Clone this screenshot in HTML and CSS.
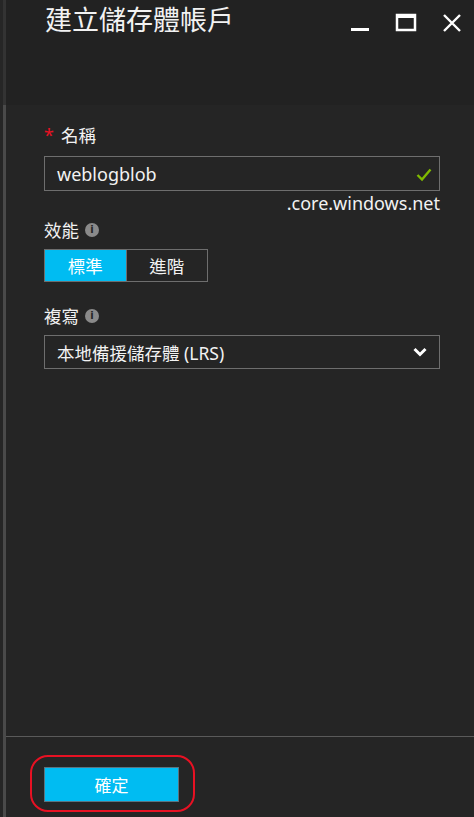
FILE: index.html
```html
<!doctype html>
<html>
  <head>
    <meta charset="utf-8">
    <title>建立儲存體帳戶</title>
    <link rel="stylesheet" href="styles.css">
  </head>
  <body>
    <div class="page">
      <div class="rail">
        <div class="rail-top"></div>
        <div class="rail-body"></div>
      </div>
      <div class="blade">
        <div class="blade-header">
          <h1 class="blade-title">建立儲存體帳戶</h1>
          <div class="window-buttons">
            <svg class="win-icon" width="20" height="20" viewBox="0 0 20 20">
              <rect x="1" y="15" width="18" height="3" fill="#fff"/>
            </svg>
            <svg class="win-icon" width="22" height="20" viewBox="0 0 22 20">
              <rect x="2" y="2" width="18" height="15" fill="none" stroke="#fff" stroke-width="2.5"/>
              <rect x="2" y="1" width="18" height="4" fill="#fff"/>
            </svg>
            <svg class="win-icon" width="20" height="20" viewBox="0 0 20 20">
              <path d="M2 2 L18 18 M18 2 L2 18" stroke="#fff" stroke-width="2.4" fill="none"/>
            </svg>
          </div>
        </div>

        <div class="blade-body">
          <div class="form">
            <label class="field-label"><span class="required">*</span> 名稱</label>
            <div class="textbox">
              <span class="textbox-value">weblogblob</span>
              <svg class="check" width="16" height="14" viewBox="0 0 16 14">
                <path d="M1.5 7 L6 11.5 L14.5 1.5" stroke="#7fba00" stroke-width="2.4" fill="none"/>
              </svg>
            </div>
            <div class="suffix">.core.windows.net</div>

            <label class="field-label">效能 <span class="info">i</span></label>
            <div class="toggle">
              <span class="toggle-option selected">標準</span>
              <span class="toggle-option">進階</span>
            </div>

            <label class="field-label label-gap">複寫 <span class="info">i</span></label>
            <div class="dropdown">
              <span class="dropdown-value">本地備援儲存體 (LRS)</span>
              <svg class="chevron" width="14" height="10" viewBox="0 0 14 10">
                <path d="M1.5 2 L7 7.5 L12.5 2" stroke="#fff" stroke-width="3" fill="none"/>
              </svg>
            </div>
          </div>

          <div class="blade-footer">
            <div class="highlight">
              <button class="ok-button">確定</button>
            </div>
          </div>
        </div>
      </div>
    </div>
  </body>
</html>
```

FILE: styles.css
```css
html, body {
  height: 100%;
  margin: 0;
  padding: 0;
}
body {
  background: #222222;
  color: #f2f2f2;
  font-family: "Segoe UI", "Noto Sans", "Noto Sans CJK TC", sans-serif;
  overflow: hidden;
}
.page {
  display: flex;
  height: 817px;
}
.rail {
  width: 6px;
  display: flex;
  flex-direction: column;
  background: #262626;
}
.rail-top {
  height: 105px;
  margin-left: 3px;
  background: #333333;
}
.rail-body {
  flex: 1;
  margin-left: 3px;
  background: #4a4a4a;
}
.blade {
  flex: 1;
  display: flex;
  flex-direction: column;
}
.blade-header {
  height: 105px;
  background: #222222;
  display: flex;
  align-items: flex-start;
  justify-content: space-between;
  padding-left: 39px;
  padding-right: 12px;
  box-sizing: border-box;
}
.blade-title {
  margin: 2px 0 0;
  font-size: 27px;
  font-weight: normal;
  line-height: 36px;
  color: #f2f2f2;
}
.window-buttons {
  display: flex;
  gap: 25px;
  margin-top: 13px;
}
.win-icon {
  display: block;
}
.blade-body {
  flex: 1;
  background: #252525;
  display: flex;
  flex-direction: column;
}
.form {
  flex: 1;
  padding: 20px 34px 0 38px;
}
.field-label {
  display: flex;
  align-items: center;
  gap: 6px;
  font-size: 17.5px;
  line-height: 20px;
  height: 20px;
  color: #f2f2f2;
}
.required {
  color: #e81123;
  font-size: 18px;
  margin-right: 1px;
}
.info {
  display: inline-flex;
  align-items: center;
  justify-content: center;
  width: 14px;
  height: 14px;
  border-radius: 50%;
  background: #8a8a8a;
  color: #252525;
  font-size: 10px;
  font-weight: bold;
  line-height: 14px;
  font-family: "DejaVu Sans", sans-serif;
}
.textbox {
  margin-top: 11px;
  height: 35px;
  border: 1px solid #6e6e6e;
  box-sizing: border-box;
  display: flex;
  align-items: center;
  justify-content: space-between;
  padding: 0 7px 0 12px;
}
.textbox-value {
  font-size: 18px;
  color: #f2f2f2;
}
.check {
  display: block;
  margin-top: 2px;
}
.suffix {
  text-align: right;
  font-size: 18px;
  line-height: 24px;
  margin-top: 0;
  margin-bottom: 5px;
  color: #f2f2f2;
}
.toggle {
  display: flex;
  width: 164px;
  height: 33px;
  margin-top: 9px;
  border: 1px solid #6e6e6e;
  box-sizing: border-box;
}
.toggle-option {
  flex: 1;
  display: flex;
  align-items: center;
  justify-content: center;
  font-size: 17.5px;
  color: #f2f2f2;
}
.toggle-option + .toggle-option {
  border-left: 1px solid #6e6e6e;
}
.toggle-option.selected {
  background: #00bcf2;
  color: #ffffff;
}
.label-gap {
  margin-top: 24px;
}
.dropdown {
  margin-top: 9px;
  height: 34px;
  border: 1px solid #6e6e6e;
  box-sizing: border-box;
  display: flex;
  align-items: center;
  justify-content: space-between;
  padding: 0 12px 0 12px;
}
.dropdown-value {
  font-size: 17.5px;
  color: #f2f2f2;
}
.chevron {
  display: block;
}
.blade-footer {
  height: 81px;
  border-top: 1px solid #5a5a5a;
  box-sizing: border-box;
  padding: 18px 0 0 24px;
}
.highlight {
  width: 165px;
  height: 57px;
  border: 2px solid #e81123;
  border-radius: 18px;
  box-sizing: border-box;
  padding: 10px 0 0 12px;
}
.ok-button {
  display: block;
  width: 135px;
  height: 35px;
  background: #00bcf2;
  border: 1px solid #5b7480;
  color: #ffffff;
  font-family: "Segoe UI", "Noto Sans", "Noto Sans CJK TC", sans-serif;
  font-size: 17px;
  padding: 0;
}
```
